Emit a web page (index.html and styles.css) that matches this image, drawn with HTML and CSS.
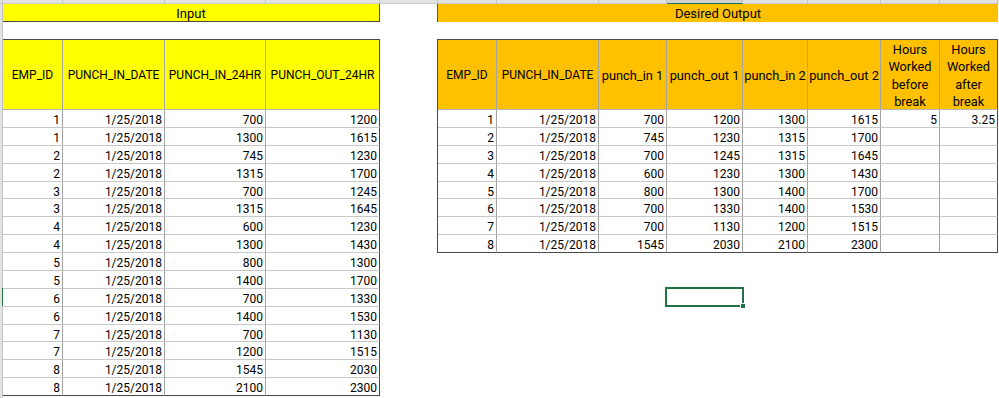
FILE: index.html
```html
<!DOCTYPE html>
<html>
<head>
<meta charset="utf-8">
<link rel="stylesheet" href="styles.css">
</head>
<body>
<div class="colhead">
  <span class="ch"></span><span class="ch"></span><span class="ch"></span><span class="ch"></span><span class="ch"></span>
  <span class="ch"></span><span class="ch"></span><span class="ch"></span><span class="ch"></span><span class="ch sel"></span>
  <span class="ch"></span><span class="ch"></span><span class="ch"></span><span class="ch"></span><span class="ch end"></span>
</div>
<div class="sheet">
  <div class="rowhead"><div class="rh-top"></div><div class="rh-sel"></div><div class="rh-bottom"></div></div>

  <section class="block block-input">
    <div class="title title-input">Input</div>
    <div class="blank"></div>
    <div class="tbl tbl-input">
      <div class="row head"><div class="c">EMP_ID</div><div class="c">PUNCH_IN_DATE</div><div class="c">PUNCH_IN_24HR</div><div class="c">PUNCH_OUT_24HR</div></div>
      <div class="row"><div class="c">1</div><div class="c">1/25/2018</div><div class="c">700</div><div class="c">1200</div></div>
      <div class="row"><div class="c">1</div><div class="c">1/25/2018</div><div class="c">1300</div><div class="c">1615</div></div>
      <div class="row"><div class="c">2</div><div class="c">1/25/2018</div><div class="c">745</div><div class="c">1230</div></div>
      <div class="row"><div class="c">2</div><div class="c">1/25/2018</div><div class="c">1315</div><div class="c">1700</div></div>
      <div class="row"><div class="c">3</div><div class="c">1/25/2018</div><div class="c">700</div><div class="c">1245</div></div>
      <div class="row"><div class="c">3</div><div class="c">1/25/2018</div><div class="c">1315</div><div class="c">1645</div></div>
      <div class="row"><div class="c">4</div><div class="c">1/25/2018</div><div class="c">600</div><div class="c">1230</div></div>
      <div class="row"><div class="c">4</div><div class="c">1/25/2018</div><div class="c">1300</div><div class="c">1430</div></div>
      <div class="row"><div class="c">5</div><div class="c">1/25/2018</div><div class="c">800</div><div class="c">1300</div></div>
      <div class="row"><div class="c">5</div><div class="c">1/25/2018</div><div class="c">1400</div><div class="c">1700</div></div>
      <div class="row"><div class="c">6</div><div class="c">1/25/2018</div><div class="c">700</div><div class="c">1330</div></div>
      <div class="row"><div class="c">6</div><div class="c">1/25/2018</div><div class="c">1400</div><div class="c">1530</div></div>
      <div class="row"><div class="c">7</div><div class="c">1/25/2018</div><div class="c">700</div><div class="c">1130</div></div>
      <div class="row"><div class="c">7</div><div class="c">1/25/2018</div><div class="c">1200</div><div class="c">1515</div></div>
      <div class="row"><div class="c">8</div><div class="c">1/25/2018</div><div class="c">1545</div><div class="c">2030</div></div>
      <div class="row"><div class="c">8</div><div class="c">1/25/2018</div><div class="c">2100</div><div class="c">2300</div></div>
    </div>
  </section>

  <div class="gap"></div>

  <section class="block block-output">
    <div class="title title-output">Desired Output</div>
    <div class="blank"></div>
    <div class="tbl tbl-output">
      <div class="row head"><div class="c">EMP_ID</div><div class="c">PUNCH_IN_DATE</div><div class="c lc">punch_in 1</div><div class="c lc">punch_out 1</div><div class="c lc">punch_in 2</div><div class="c lc">punch_out 2</div><div class="c lc">Hours<br>Worked<br>before<br>break</div><div class="c lc">Hours<br>Worked<br>after<br>break</div></div>
      <div class="row"><div class="c">1</div><div class="c">1/25/2018</div><div class="c">700</div><div class="c">1200</div><div class="c">1300</div><div class="c">1615</div><div class="c">5</div><div class="c">3.25</div></div>
      <div class="row"><div class="c">2</div><div class="c">1/25/2018</div><div class="c">745</div><div class="c">1230</div><div class="c">1315</div><div class="c">1700</div><div class="c"></div><div class="c"></div></div>
      <div class="row"><div class="c">3</div><div class="c">1/25/2018</div><div class="c">700</div><div class="c">1245</div><div class="c">1315</div><div class="c">1645</div><div class="c"></div><div class="c"></div></div>
      <div class="row"><div class="c">4</div><div class="c">1/25/2018</div><div class="c">600</div><div class="c">1230</div><div class="c">1300</div><div class="c">1430</div><div class="c"></div><div class="c"></div></div>
      <div class="row"><div class="c">5</div><div class="c">1/25/2018</div><div class="c">800</div><div class="c">1300</div><div class="c">1400</div><div class="c">1700</div><div class="c"></div><div class="c"></div></div>
      <div class="row"><div class="c">6</div><div class="c">1/25/2018</div><div class="c">700</div><div class="c">1330</div><div class="c">1400</div><div class="c">1530</div><div class="c"></div><div class="c"></div></div>
      <div class="row"><div class="c">7</div><div class="c">1/25/2018</div><div class="c">700</div><div class="c">1130</div><div class="c">1200</div><div class="c">1515</div><div class="c"></div><div class="c"></div></div>
      <div class="row"><div class="c">8</div><div class="c">1/25/2018</div><div class="c">1545</div><div class="c">2030</div><div class="c">2100</div><div class="c">2300</div><div class="c"></div><div class="c"></div></div>
    </div>
  </section>
</div>
<div class="selection"><span class="handle"></span></div>
</body>
</html>
```
FILE: styles.css
```css
* { box-sizing: border-box; }
html, body { margin: 0; padding: 0; }
body {
  width: 999px;
  height: 398px;
  overflow: hidden;
  position: relative;
  background: #ffffff;
  font-family: Roboto, "Liberation Sans", sans-serif;
  font-size: 12px;
  color: #000000;
}

/* spreadsheet column header strip */
.colhead {
  display: grid;
  grid-template-columns: 3px 60px 102px 101px 114px 58px 59px 102px 68px 76px 65px 73px 59px 58px 1fr;
  height: 4px;
}
.ch {
  background: #e3e3e3;
  border-right: 1px solid #c2c2c2;
  border-bottom: 1px solid #cacaca;
}
.ch.sel { background: #d3d3d3; border-bottom-color: #217346; }
.ch.end { border-right: none; }

.sheet {
  display: flex;
  align-items: flex-start;
}

/* row header strip */
.rowhead {
  width: 3px;
  height: 394px;
  display: flex;
  flex-direction: column;
  background: #e3e3e3;
}
.rh-top { height: 284px; border-right: 1px solid #c2c2c2; }
.rh-sel { height: 18px; border-right: 1px solid #217346; }
.rh-bottom { flex: 1; border-right: 1px solid #c2c2c2; }

.block-input { width: 377px; }
.gap { width: 57px; flex: none; }
.block-output { width: 561px; }

.title {
  height: 18px;
  padding-top: 1px;
  line-height: 17px;
  font-size: 13px;
  text-align: center;
  white-space: nowrap;
}
.title-input {
  background: #ffff00;
  border-right: 1px solid #4a4a4a;
  border-bottom: 1px solid #4a4a4a;
}
.title-output {
  background: #ffc000;
  border-left: 1px solid #6a5a20;
}
.blank { height: 17px; }

.tbl { border-top: 1px solid #4a4a4a; }
.tbl-input { --cols: 60px 102px 101px 114px; }
.tbl-output { --cols: 59px 102px 68px 76px 65px 73px 59px 58px; border-left: 1px solid #4a4a4a; }

.row {
  display: grid;
  grid-template-columns: var(--cols);
}
.c {
  height: 17.875px;
  border-right: 1px solid #a3a3a3;
  border-bottom: 1px solid #c8c8c8;
  padding: 3px 2px 0 0;
  line-height: 15px;
  text-align: right;
  white-space: nowrap;
  overflow: hidden;
}
.c:last-child { border-right-color: #4a4a4a; }
.row:last-child .c { border-bottom-color: #4a4a4a; }

.head .c {
  height: 70px;
  display: flex;
  align-items: center;
  justify-content: center;
  text-align: center;
  padding: 2px 0 0 0;
  line-height: 17.5px;
  border-bottom-color: #b4b4b4;
  border-right-color: #a6a6a0;
}
.head .c.lc { font-size: 12.8px; }
.head .c:last-child { border-right-color: #4a4a4a; }
.tbl-input .head .c { background: #ffff00; }
.tbl-output .head .c { background: #ffc000; }

/* active cell selection overlay */
.selection {
  position: absolute;
  left: 665px;
  top: 287px;
  width: 79px;
  height: 20px;
  border: 2px solid #217346;
}
.handle {
  position: absolute;
  right: -4px;
  bottom: -4px;
  width: 6px;
  height: 6px;
  background: #217346;
  border: 1px solid #ffffff;
}
```
